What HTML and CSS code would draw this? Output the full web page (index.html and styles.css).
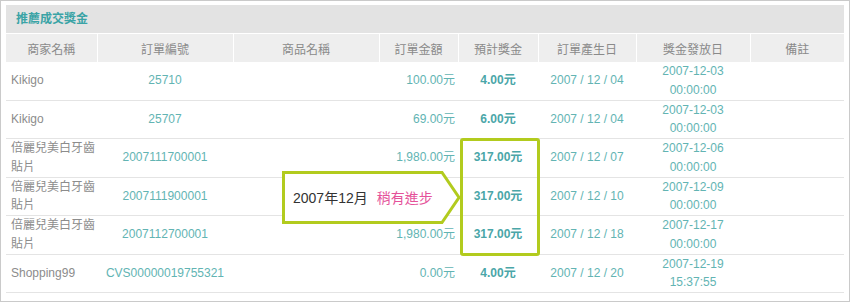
FILE: index.html
```html
<!DOCTYPE html>
<html lang="zh-Hant">
<head>
<meta charset="utf-8">
<link rel="stylesheet" href="styles.css">
</head>
<body>
<div class="frame">
  <div class="panel">
    <div class="title">推薦成交獎金</div>
    <table class="grid">
      <colgroup>
        <col class="c1"><col class="c2"><col class="c3"><col class="c4"><col class="c5"><col class="c6"><col class="c7"><col class="c8">
      </colgroup>
      <thead>
        <tr>
          <th>商家名稱</th><th>訂單編號</th><th>商品名稱</th><th>訂單金額</th><th>預計獎金</th><th>訂單產生日</th><th>獎金發放日</th><th>備註</th>
        </tr>
      </thead>
      <tbody>
        <tr>
          <td class="name">Kikigo</td><td class="center teal">25710</td><td></td><td class="amount">100.00元</td><td class="bonus">4.00元</td><td class="center teal">2007 / 12 / 04</td><td class="center teal">2007-12-03<br>00:00:00</td><td></td>
        </tr>
        <tr>
          <td class="name">Kikigo</td><td class="center teal">25707</td><td></td><td class="amount">69.00元</td><td class="bonus">6.00元</td><td class="center teal">2007 / 12 / 04</td><td class="center teal">2007-12-03<br>00:00:00</td><td></td>
        </tr>
        <tr>
          <td class="name">倍麗兒美白牙齒<br>貼片</td><td class="center teal">2007111700001</td><td></td><td class="amount">1,980.00元</td><td class="bonus">317.00元</td><td class="center teal">2007 / 12 / 07</td><td class="center teal">2007-12-06<br>00:00:00</td><td></td>
        </tr>
        <tr>
          <td class="name">倍麗兒美白牙齒<br>貼片</td><td class="center teal">2007111900001</td><td></td><td class="amount"></td><td class="bonus">317.00元</td><td class="center teal">2007 / 12 / 10</td><td class="center teal">2007-12-09<br>00:00:00</td><td></td>
        </tr>
        <tr>
          <td class="name">倍麗兒美白牙齒<br>貼片</td><td class="center teal">2007112700001</td><td></td><td class="amount">1,980.00元</td><td class="bonus">317.00元</td><td class="center teal">2007 / 12 / 18</td><td class="center teal">2007-12-17<br>00:00:00</td><td></td>
        </tr>
        <tr>
          <td class="name">Shopping99</td><td class="center teal">CVS00000019755321</td><td></td><td class="amount">0.00元</td><td class="bonus">4.00元</td><td class="center teal">2007 / 12 / 20</td><td class="center teal">2007-12-19<br>15:37:55</td><td></td>
        </tr>
      </tbody>
    </table>
  </div>

  <div class="highlight"></div>
  <div class="callout">
    <svg class="callout-shape" width="182" height="54" viewBox="0 0 182 54">
      <polygon points="1.5,1.5 160,1.5 177,26.5 160,51.5 1.5,51.5" fill="#ffffff" stroke="#b2cb1e" stroke-width="3" stroke-linejoin="miter"/>
    </svg>
    <span class="callout-text">2007年12月<span class="pink">稍有進步</span></span>
  </div>
</div>
</body>
</html>
```

FILE: styles.css
```css
html, body {
  margin: 0;
  padding: 0;
  background: #ffffff;
}

.frame {
  position: relative;
  width: 850px;
  height: 302px;
  box-sizing: border-box;
  border: 1px solid #cacaca;
  padding: 4px 4px 0 5px;
  font-family: "Liberation Sans", Arial, "Noto Sans CJK TC", sans-serif;
  font-size: 12px;
}

.panel {
  width: 838px;
}

.title {
  height: 28px;
  line-height: 28px;
  background: #e3e3e3;
  color: #3aa3a6;
  font-weight: bold;
  font-size: 12px;
  padding-left: 10px;
  border-bottom: 1px solid #ffffff;
}

.grid {
  width: 838px;
  border-collapse: collapse;
  table-layout: fixed;
}

col.c1 { width: 91px; }
col.c2 { width: 136px; }
col.c3 { width: 146px; }
col.c4 { width: 79px; }
col.c5 { width: 80px; }
col.c6 { width: 98px; }
col.c7 { width: 114px; }
col.c8 { width: 94px; }

.grid th {
  height: 28px;
  padding: 0;
  background: #eeeeee;
  color: #8a8a8a;
  font-weight: normal;
  font-size: 12px;
  text-align: center;
  border-right: 1px solid #ffffff;
}

.grid th:last-child {
  border-right: none;
}

.grid td {
  padding: 0;
  line-height: 18.6px;
  height: 37.5px;
  border-bottom: 1px solid #e4e4e4;
  vertical-align: middle;
  white-space: nowrap;
}

.grid td.name {
  color: #8c8c8c;
  padding-left: 5px;
}

.grid td.center {
  text-align: center;
}

.grid td.teal {
  color: #62b4b3;
}

.grid td.amount {
  text-align: right;
  padding-right: 3px;
  color: #62b4b3;
}

.grid td.bonus {
  text-align: center;
  font-weight: bold;
  color: #4aa6a8;
}

.highlight {
  position: absolute;
  left: 459px;
  top: 137px;
  width: 80px;
  height: 118px;
  box-sizing: border-box;
  border: 3px solid #b2cb1e;
  border-radius: 3px;
}

.callout {
  position: absolute;
  left: 281px;
  top: 170px;
  width: 182px;
  height: 54px;
}

.callout-shape {
  position: absolute;
  left: 0;
  top: 0;
}

.callout-text {
  position: absolute;
  left: 11px;
  top: 0;
  line-height: 54px;
  font-size: 14px;
  color: #333333;
  white-space: nowrap;
}

.pink {
  color: #e5529a;
  margin-left: 9px;
}
```
